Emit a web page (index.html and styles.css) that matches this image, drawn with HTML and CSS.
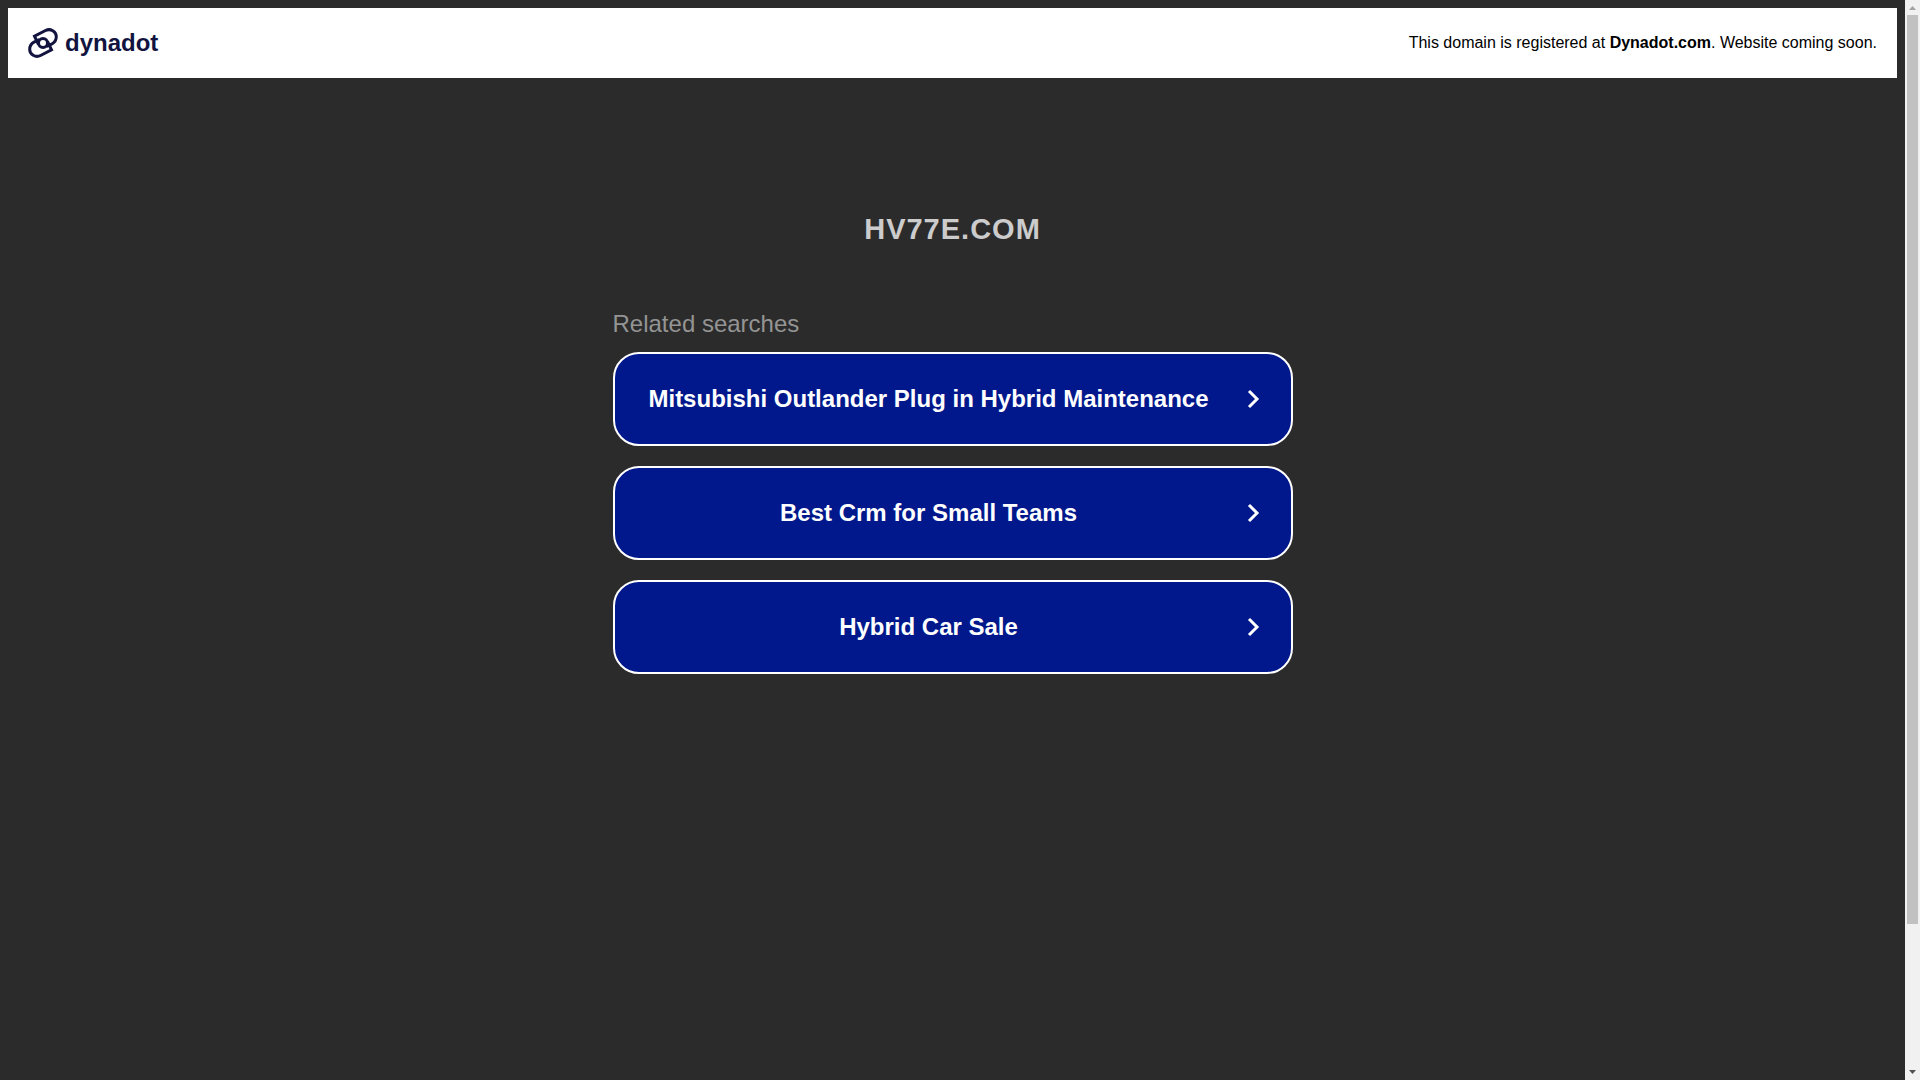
FILE: index.html
```html
<!DOCTYPE html>
<html lang="en">
<head>
  <meta charset="UTF-8">
  <meta name="viewport" content="width=device-width, initial-scale=1.0">
  <title>hv77e.com</title>
  <link rel="stylesheet" href="styles.css">
</head>
<body>

  <div class="page">
    <header class="banner">
      <a class="logo" href="#">
        <svg class="logo-mark" viewBox="0 0 30 30" fill="none" stroke="#12143f" stroke-width="3">
          <path d="M10.500 16.500 L6.500 8.200 L17.500 2.500 C22.500 0 28.300 3.500 28.300 8.500 C28.300 12 26.500 14.500 24 15.800 L18.500 18.500"/>
          <path d="M19.500 13.500 L23.500 21.800 L12.500 27.500 C7.500 30 1.700 26.500 1.700 21.500 C1.700 18 3.500 15.500 6 14.200 L11.500 11.500"/>
          <circle cx="15" cy="15" r="4.500"/>
        </svg>
        <span>dynadot</span>
      </a>
      <p class="notice">This domain is registered at <a href="#">Dynadot.com</a>. Website coming soon.</p>
    </header>

    <main class="content">
      <h1>hv77e.com</h1>
      <h2>Related searches</h2>
      <nav class="searches">
        <a class="search" href="#">
          <span>Mitsubishi Outlander Plug in Hybrid Maintenance</span>
          <svg class="chevron" viewBox="0 0 13 20"><path d="M2 2 L10 10 L2 18"/></svg>
        </a>
        <a class="search" href="#">
          <span>Best Crm for Small Teams</span>
          <svg class="chevron" viewBox="0 0 13 20"><path d="M2 2 L10 10 L2 18"/></svg>
        </a>
        <a class="search" href="#">
          <span>Hybrid Car Sale</span>
          <svg class="chevron" viewBox="0 0 13 20"><path d="M2 2 L10 10 L2 18"/></svg>
        </a>
      </nav>
    </main>
  </div>

  <div class="scrollbar">
    <svg class="arrow" viewBox="0 0 15 15"><path d="M4 10 L7.500 6 L11 10 Z" fill="#a3a3a3"/></svg>
    <div class="track"><div class="thumb"></div></div>
    <svg class="arrow" viewBox="0 0 15 15"><path d="M4 5 L7.500 9 L11 5 Z" fill="#505050"/></svg>
  </div>

</body>
</html>
```
FILE: styles.css
```css
* {
  box-sizing: border-box;
}

body {
  margin: 0;
  display: flex;
  min-height: 100vh;
  background: #2b2b2b;
  font-family: "Liberation Sans", Arial, sans-serif;
}

a {
  color: inherit;
  text-decoration: none;
}

.page {
  flex: 1;
  padding: 8px;
}

/* top banner */
.banner {
  display: flex;
  align-items: center;
  justify-content: space-between;
  padding: 20px;
  background: #fff;
}

.logo {
  display: flex;
  align-items: center;
  gap: 7px;
  color: #12143f;
  font-size: 24px;
  font-weight: bold;
  line-height: 30px;
}

.logo-mark {
  width: 30px;
  height: 30px;
}

.notice {
  margin: 0;
  font-size: 16px;
  color: #000;
}

.notice a {
  font-weight: bold;
}

/* searches */
.content {
  max-width: 680px;
  margin: 0 auto;
}

h1 {
  margin: 133px 0 63px;
  color: #ccc;
  font-size: 29px;
  line-height: 36px;
  letter-spacing: 1px;
  text-align: center;
  text-transform: uppercase;
}

h2 {
  margin: 0 0 14px;
  color: #949494;
  font-size: 24px;
  font-weight: normal;
  line-height: 28px;
}

.searches {
  display: flex;
  flex-direction: column;
  gap: 20px;
}

.search {
  display: flex;
  align-items: center;
  padding: 31px;
  border: 2px solid #fff;
  border-radius: 26px;
  background: #00188b;
  color: #fff;
  font-size: 24px;
  font-weight: bold;
  line-height: 28px;
}

.search span {
  flex: 1;
  padding-right: 35px;
  text-align: center;
}

.chevron {
  width: 13px;
  height: 20px;
  fill: none;
  stroke: #fff;
  stroke-width: 3;
}

/* scrollbar */
.scrollbar {
  display: flex;
  flex-direction: column;
  width: 15px;
  height: 100vh;
  background: #f1f1f1;
}

.arrow {
  width: 15px;
  height: 15px;
}

.track {
  flex: 1;
  padding: 0 2px;
}

.thumb {
  height: 909px;
  max-height: 100%;
  background: #c1c1c1;
}
```
